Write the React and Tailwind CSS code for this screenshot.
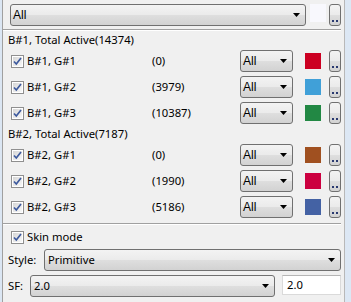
import React from 'react'

const groups = [
  {
    title: 'B#1, Total Active(14374)',
    rows: [
      { name: 'B#1, G#1', count: '(0)', color: 'bg-[#cc0022]' },
      { name: 'B#1, G#2', count: '(3979)', color: 'bg-[#40a0d8]' },
      { name: 'B#1, G#3', count: '(10387)', color: 'bg-[#228844]' },
    ],
  },
  {
    title: 'B#2, Total Active(7187)',
    rows: [
      { name: 'B#2, G#1', count: '(0)', color: 'bg-[#a05020]' },
      { name: 'B#2, G#2', count: '(1990)', color: 'bg-[#cc0040]' },
      { name: 'B#2, G#3', count: '(5186)', color: 'bg-[#4462a4]' },
    ],
  },
]

const gloss =
  'bg-[linear-gradient(to_bottom,#f3f3f3_0%,#ebebeb_48%,#dedede_52%,#d2d2d2_100%)]'

function Combo({ text, className = '' }) {
  return (
    <div
      className={`flex items-center justify-between border border-[#707070] rounded-[3px] pl-[2px] pr-[5px] ${gloss} ${className}`}
    >
      <span className="[font-family:'Liberation_Sans',Arial,sans-serif] text-[12px] leading-none text-black">
        {text}
      </span>
      <svg width="7" height="4" viewBox="0 0 7 4">
        <polygon points="0,0 7,0 3.5,4" fill="#000" />
      </svg>
    </div>
  )
}

function DotButton({ className = '' }) {
  return (
    <div
      className={`flex items-end justify-center gap-[2px] pb-[3px] border border-[#707070] rounded-[3px] ${gloss} ${className}`}
    >
      <div className="w-[2px] h-[2px] bg-[#2a3a70]" />
      <div className="w-[2px] h-[2px] bg-[#2a3a70]" />
    </div>
  )
}

function Check() {
  return (
    <svg width="13" height="13" viewBox="0 0 13 13" className="shrink-0">
      <defs>
        <linearGradient id="cbg" x1="0" y1="0" x2="1" y2="1">
          <stop offset="0" stopColor="#d6d6d6" />
          <stop offset="1" stopColor="#f8f8f8" />
        </linearGradient>
      </defs>
      <rect x="0.5" y="0.5" width="12" height="12" fill="#fff" stroke="#8f8f8f" />
      <rect x="2" y="2" width="9" height="9" fill="url(#cbg)" />
      <path d="M3 6.5 L5.3 9 L10 3" fill="none" stroke="#3d5a9e" strokeWidth="1.7" />
    </svg>
  )
}

function Separator() {
  return <div className="mt-[3px] mr-[3px] border-t border-[#a0a0a0] border-b border-b-white" />
}

export default function App() {
  return (
    <div className="w-[351px] h-[302px] flex bg-[#f0f0f0] overflow-hidden [font-family:'Noto_Sans',Tahoma,sans-serif] text-[11.25px] text-black">
      <div className="w-[2px] bg-[#dbe6f3]" />
      <div className="w-[1px] bg-[#a0a0a0]" />

      <div className="w-[341px] flex flex-col pt-[4px]">
        <div className="h-[22px] flex items-start pl-[7px]">
          <Combo text="All" className="w-[296px] h-[22px]" />
          <div className="ml-[4px] w-[16px] h-[18px] bg-[#f8f8fd]" />
          <DotButton className="ml-[3px] w-[12px] h-[22px]" />
        </div>

        <Separator />

        {groups.map((g, gi) => (
          <div key={gi}>
            <div className={`${gi === 0 ? 'h-[17px] pt-[2px]' : 'h-[16px]'} flex items-center pl-[5px]`}>
              {g.title}
            </div>
            {g.rows.map((r) => (
              <div key={r.name} className="h-[26px] flex items-center pl-[8px]">
                <Check />
                <span className="ml-[3px] w-[125px]">{r.name}</span>
                <span className="w-[88px]">{r.count}</span>
                <Combo text="All" className="w-[53px] h-[22px]" />
                <div className={`ml-[12px] w-[16px] h-[16px] ${r.color}`} />
                <DotButton className="ml-[8px] w-[12px] h-[22px]" />
              </div>
            ))}
          </div>
        ))}

        <Separator />

        <div className="h-[24px] flex items-center pl-[8px]">
          <Check />
          <span className="ml-[3px]">Skin mode</span>
        </div>

        <div className="h-[22px] flex items-center pl-[5px]">
          <span className="w-[36px]">Style:</span>
          <div className="w-[297px] h-[22px] flex items-center justify-between border border-[#707070] rounded-[3px] pl-[3px] pr-[5px] bg-[linear-gradient(to_bottom,#f3f3f3_0%,#ebebeb_48%,#dedede_52%,#d2d2d2_100%)]">
            <span>Primitive</span>
            <svg width="7" height="4" viewBox="0 0 7 4">
              <polygon points="0,0 7,0 3.5,4" fill="#000" />
            </svg>
          </div>
        </div>

        <div className="mt-[4px] h-[22px] flex items-start pl-[5px]">
          <span className="w-[22px] h-[22px] flex items-center">SF:</span>
          <div className="w-[245px] h-[22px] flex items-center justify-between border border-[#707070] rounded-[3px] pl-[3px] pr-[5px] bg-[linear-gradient(to_bottom,#f3f3f3_0%,#ebebeb_48%,#dedede_52%,#d2d2d2_100%)]">
            <span>2.0</span>
            <svg width="7" height="4" viewBox="0 0 7 4">
              <polygon points="0,0 7,0 3.5,4" fill="#000" />
            </svg>
          </div>
          <div className="ml-[7px] w-[59px] h-[20px] flex items-center pl-[4px] bg-white border border-[#dadada] border-t-[#b5b5b5]">
            2.0
          </div>
        </div>
      </div>

      <div className="w-[1px] bg-[#b8b8b8]" />
      <div className="flex-1 bg-[#dce7f4]" />
    </div>
  )
}
